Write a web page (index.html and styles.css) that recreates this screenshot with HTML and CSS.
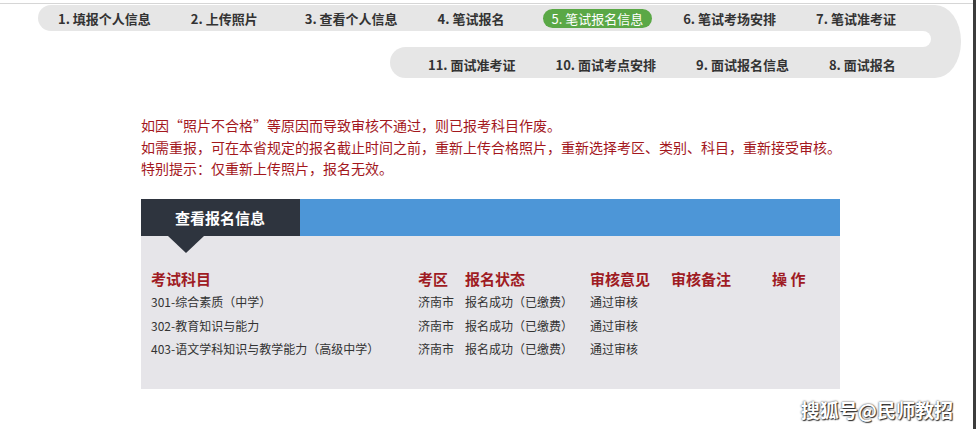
FILE: index.html
```html
<!DOCTYPE html>
<html lang="zh-CN">
<head>
  <meta charset="UTF-8">
  <meta name="viewport" content="width=device-width, initial-scale=1.0">
  <title>笔试报名信息</title>
  <link rel="stylesheet" href="styles.css">
</head>
<body>
<div class="page">
  <div class="topline"></div>

  <div class="track">
    <div class="lanes">
      <ol class="lane lane-top">
        <li class="step">1.&nbsp;填报个人信息</li>
        <li class="step step-wide">2.&nbsp;上传照片</li>
        <li class="step">3.&nbsp;查看个人信息</li>
        <li class="step">4.&nbsp;笔试报名</li>
        <li class="step step-current">5.&nbsp;笔试报名信息</li>
        <li class="step">6.&nbsp;笔试考场安排</li>
        <li class="step">7.&nbsp;笔试准考证</li>
      </ol>
      <div class="lane-gap"><span class="cut"></span></div>
      <ol class="lane lane-bottom">
        <li class="step">11.&nbsp;面试准考证</li>
        <li class="step">10.&nbsp;面试考点安排</li>
        <li class="step">9.&nbsp;面试报名信息</li>
        <li class="step">8.&nbsp;面试报名</li>
      </ol>
    </div>
    <div class="bend"></div>
  </div>

  <div class="notice">
    <p>如因“照片不合格”等原因而导致审核不通过，则已报考科目作废。</p>
    <p>如需重报，可在本省规定的报名截止时间之前，重新上传合格照片，重新选择考区、类别、科目，重新接受审核。</p>
    <p>特别提示：仅重新上传照片，报名无效。</p>
  </div>

  <div class="panel">
    <div class="panel-head">
      <div class="panel-tab">查看报名信息</div>
    </div>
    <div class="panel-body">
      <table class="signup">
        <tr>
          <th class="col-subject">考试科目</th>
          <th class="col-area">考区</th>
          <th class="col-status">报名状态</th>
          <th class="col-review">审核意见</th>
          <th class="col-note">审核备注</th>
          <th>操&nbsp;作</th>
        </tr>
        <tr>
          <td>301-综合素质（中学）</td>
          <td>济南市</td>
          <td>报名成功（已缴费）</td>
          <td>通过审核</td>
          <td></td>
          <td></td>
        </tr>
        <tr>
          <td>302-教育知识与能力</td>
          <td>济南市</td>
          <td>报名成功（已缴费）</td>
          <td>通过审核</td>
          <td></td>
          <td></td>
        </tr>
        <tr>
          <td>403-语文学科知识与教学能力（高级中学）</td>
          <td>济南市</td>
          <td>报名成功（已缴费）</td>
          <td>通过审核</td>
          <td></td>
          <td></td>
        </tr>
      </table>
    </div>
  </div>

  <div class="watermark">搜狐号@民师教招</div>
</div>
</body>
</html>
```

FILE: styles.css
```css
body {
  margin: 0;
  padding: 0;
  background-color: #fff;
  font-family: "Noto Sans CJK SC", "Noto Sans", sans-serif;
}

.page {
  width: 973px;
  height: 429px;
  border-right: 3px solid #3c3c3c;
  overflow: hidden;
}

.topline {
  height: 1px;
  margin-top: 3px;
  background-color: #d6d6d6;
}

/* step track with the u-turn on the right */
.track {
  display: flex;
  margin: 1px 0 0 38px;
  width: 923px;
}

.lanes {
  flex: 1;
}

.lane {
  display: flex;
  align-items: center;
  gap: 40px;
  margin: 0;
  list-style: none;
  background-color: #e6e6e6;
}

.lane-top {
  height: 26px;
  padding: 0 0 0 20px;
  border-radius: 13px 0 0 13px;
}

.lane-gap {
  height: 16px;
  background-color: #e6e6e6;
}

.cut {
  display: block;
  height: 100%;
  margin-right: 4px;
  background-color: #fff;
  border-radius: 0 8px 8px 0;
}

.lane-bottom {
  height: 31px;
  margin-left: 352px;
  padding: 3px 0 0 38px;
  box-sizing: border-box;
  border-radius: 16px 0 0 16px;
}

.bend {
  width: 26px;
  height: 73px;
  background-color: #e6e6e6;
  border-radius: 0 26px 26px 0 / 0 36px 36px 0;
}

.step {
  font-size: 13px;
  font-weight: bold;
  color: #333;
  white-space: nowrap;
  line-height: 19px;
}

.step-wide {
  margin-right: 7px;
}

.step-current {
  padding: 0 9px 0 8px;
  margin-left: -1px;
  margin-right: -9px;
  border-radius: 10px;
  background-color: #5aa846;
  color: #fff;
  font-weight: normal;
}

/* notice */
.notice {
  margin: 37px 0 0 141px;
  color: #a3171d;
  font-size: 14px;
  line-height: 21.5px;
}

.notice p {
  margin: 0;
}

/* signup panel */
.panel {
  width: 699px;
  margin: 19px 0 0 141px;
}

.panel-head {
  height: 37px;
  background-color: #4d96d7;
}

.panel-tab {
  position: relative;
  width: 125px;
  height: 37px;
  padding-left: 34px;
  background-color: #2e343e;
  color: #fff;
  font-size: 15px;
  font-weight: bold;
  line-height: 37px;
}

.panel-tab::after {
  content: "";
  position: absolute;
  left: 27px;
  top: 37px;
  border-left: 18px solid transparent;
  border-right: 18px solid transparent;
  border-top: 17px solid #2e343e;
}

.panel-body {
  height: 153px;
  padding: 31px 0 0 10px;
  box-sizing: border-box;
  background-color: #e6e5e9;
}

.signup {
  border-collapse: collapse;
  width: 689px;
}

.signup th,
.signup td {
  padding: 0;
  height: 23.5px;
  text-align: left;
  white-space: nowrap;
}

.signup th {
  color: #9f1b23;
  font-size: 15px;
  font-weight: bold;
}

.signup td {
  color: #333;
  font-size: 12px;
}

.col-subject { width: 267px; }
.col-area { width: 47px; }
.col-status { width: 125px; }
.col-review { width: 81px; }
.col-note { width: 101px; }

.watermark {
  margin-top: 10px;
  padding-right: 20px;
  text-align: right;
  color: #fff;
  font-size: 19px;
  font-weight: bold;
  line-height: 22px;
  text-shadow: 0 0 2px #222, 1px 1px 1px #333;
}
```
